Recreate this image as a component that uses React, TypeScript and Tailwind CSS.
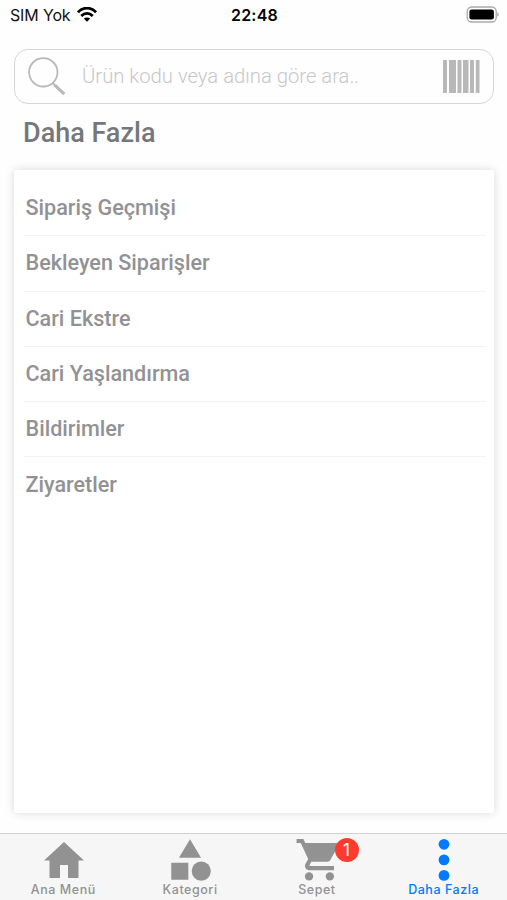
import React from "react";

const items = [
  "Sipariş Geçmişi",
  "Bekleyen Siparişler",
  "Cari Ekstre",
  "Cari Yaşlandırma",
  "Bildirimler",
  "Ziyaretler",
];

function StatusBar() {
  return (
    <header className="grid h-[30px] grid-cols-3 items-center pl-[10px] pr-[8px] font-['Inter',sans-serif] text-[16px] leading-[30px] text-[#111]">
      <div className="flex items-center gap-[7px]">
        <span className="whitespace-nowrap tracking-[-0.15px]">SIM Yok</span>
        <svg className="-mt-px h-[15px] w-[20px]" viewBox="0 0 20 15" fill="none" stroke="#000" strokeWidth="2.8">
          <path d="M1 5.3C6-.3 14-.3 19 5.3" />
          <path d="M4.3 8.9c3.3-3.4 8.1-3.4 11.4 0" />
          <path d="M6.8 11.6c1.8-1.6 4.6-1.6 6.4 0L10 14.8z" fill="#000" stroke="none" />
        </svg>
      </div>
      <div className="text-center font-semibold tracking-[0.25px] text-black">22:48</div>
      <svg className="-mt-[2px] h-[17px] w-[34px] justify-self-end" viewBox="0 0 34 17" fill="none">
        <rect x="2.2" y="1" width="29" height="15" rx="4.5" stroke="#aaa" strokeWidth="1.3" />
        <rect x="4.4" y="3.5" width="24.5" height="10" rx="2.3" fill="#000" />
        <path d="M32.4 6.5c1.6.4 1.6 3.6 0 4z" fill="#999" />
      </svg>
    </header>
  );
}

function SearchBox() {
  return (
    <div className="mx-[14px] mt-[19px] flex h-[55px] w-[480px] items-center rounded-[14px] border-[1.5px] border-[#d6d6d6] pl-[13px] pr-[13.5px]">
      <svg className="h-[40px] w-[39px] shrink-0" viewBox="0 0 39 40" fill="none" stroke="#b9b9b9">
        <circle cx="15.3" cy="15.3" r="14.2" strokeWidth="1.8" />
        <path d="M24.5 26l3 2.8" strokeWidth="2" />
        <path d="M26.8 28.2l9.5 9" strokeWidth="3.2" />
      </svg>
      <span className="mb-px ml-[15px] flex-1 whitespace-nowrap font-['Roboto',sans-serif] text-[20.25px] font-light leading-6 text-[#c7c7c9]">
        Ürün kodu veya adına göre ara..
      </span>
      <svg className="h-[33px] w-[37px] shrink-0" viewBox="0 0 37 33" fill="#b8b8b8">
        <path d="M0 0h4v33H0zM6 0h7v33H6zM14.5 0h4v33h-4zM20 0h5.5v33H20zM27 0h4v33h-4zM32.8 0h3.7v33h-3.7z" />
      </svg>
    </div>
  );
}

function TabBar() {
  return (
    <nav className="grid h-[67px] grid-cols-4 border-t border-[#d2d2d4] bg-[#f6f6f6] font-['Inter',sans-serif] text-[12.5px] font-medium leading-[14px] tracking-[0.55px] text-[#929292]">
      <a className="flex flex-col items-center">
        <svg className="mt-px h-[48px] w-[48px]" viewBox="0 0 48 48" fill="currentColor">
          <path d="M25 7L5 25.5h5.5V43H21V30h8v13h10.5V25.5H45z" />
        </svg>
        <span>Ana Menü</span>
      </a>
      <a className="flex flex-col items-center">
        <svg className="mt-px h-[48px] w-[50px]" viewBox="0 0 24 23" fill="currentColor" preserveAspectRatio="none">
          <path d="M12 2l-5.3 8.9h10.6zM3 13.3h8.2v8.2H3z" />
          <circle cx="17.4" cy="17.3" r="4.6" />
        </svg>
        <span>Kategori</span>
      </a>
      <a className="relative flex flex-col items-center">
        <svg className="mt-px h-[48px] w-[50px]" viewBox="0 0 50 48" fill="currentColor">
          <g transform="translate(2.5 -.2) scale(2.08)">
            <circle cx="7" cy="20" r="2" />
            <circle cx="17" cy="20" r="2" />
            <path d="M1 2v2h2l3.6 7.59-1.35 2.45c-.16.28-.25.61-.25.96 0 1.1.9 2 2 2h12v-2H7.42c-.14 0-.25-.11-.25-.25l.03-.12.9-1.63h7.45c.75 0 1.41-.41 1.75-1.03l3.58-6.49c.08-.14.12-.31.12-.48 0-.55-.45-1-1-1H5.21l-.94-2z" />
          </g>
        </svg>
        <span>Sepet</span>
        <span className="absolute left-[81px] top-[4px] flex h-[24px] w-[24px] items-center justify-center rounded-full bg-[#ff3b30] text-[17px] font-normal tracking-normal text-white">1</span>
      </a>
      <a className="flex flex-col items-center text-[#007aff]">
        <svg className="mt-px h-[48px] w-[48px]" viewBox="0 0 48 48" fill="currentColor">
          <circle cx="24" cy="9.3" r="5.4" />
          <circle cx="24" cy="24.9" r="5.4" />
          <circle cx="24" cy="40.4" r="5.4" />
        </svg>
        <span>Daha Fazla</span>
      </a>
    </nav>
  );
}

export default function App() {
  return (
    <div className="flex h-[900px] w-[507px] flex-col overflow-hidden bg-[#fefefe]">
      <StatusBar />
      <SearchBox />
      <h1 className="ml-[23px] mt-[13px] h-[31px] font-['Roboto',sans-serif] text-[27px] font-medium leading-[32px] text-[#76777a]">
        Daha Fazla
      </h1>
      <main className="mb-[20.5px] ml-[14px] mr-[13.5px] mt-[22px] min-h-0 flex-1 rounded-[2px] bg-white pl-[10px] pr-[7.5px] pt-[11px] shadow-[0_0_10px_rgba(0,0,0,0.15)]">
        <ul className="font-['Roboto',sans-serif] text-[21.6px] font-medium leading-[26px] text-[#929294]">
          {items.map((label) => (
            <li key={label} className="flex h-[55.25px] items-center whitespace-nowrap border-b-[1.5px] border-[#f3f3f3] pl-[1.5px] last:border-b-0">
              {label}
            </li>
          ))}
        </ul>
      </main>
      <TabBar />
    </div>
  );
}
